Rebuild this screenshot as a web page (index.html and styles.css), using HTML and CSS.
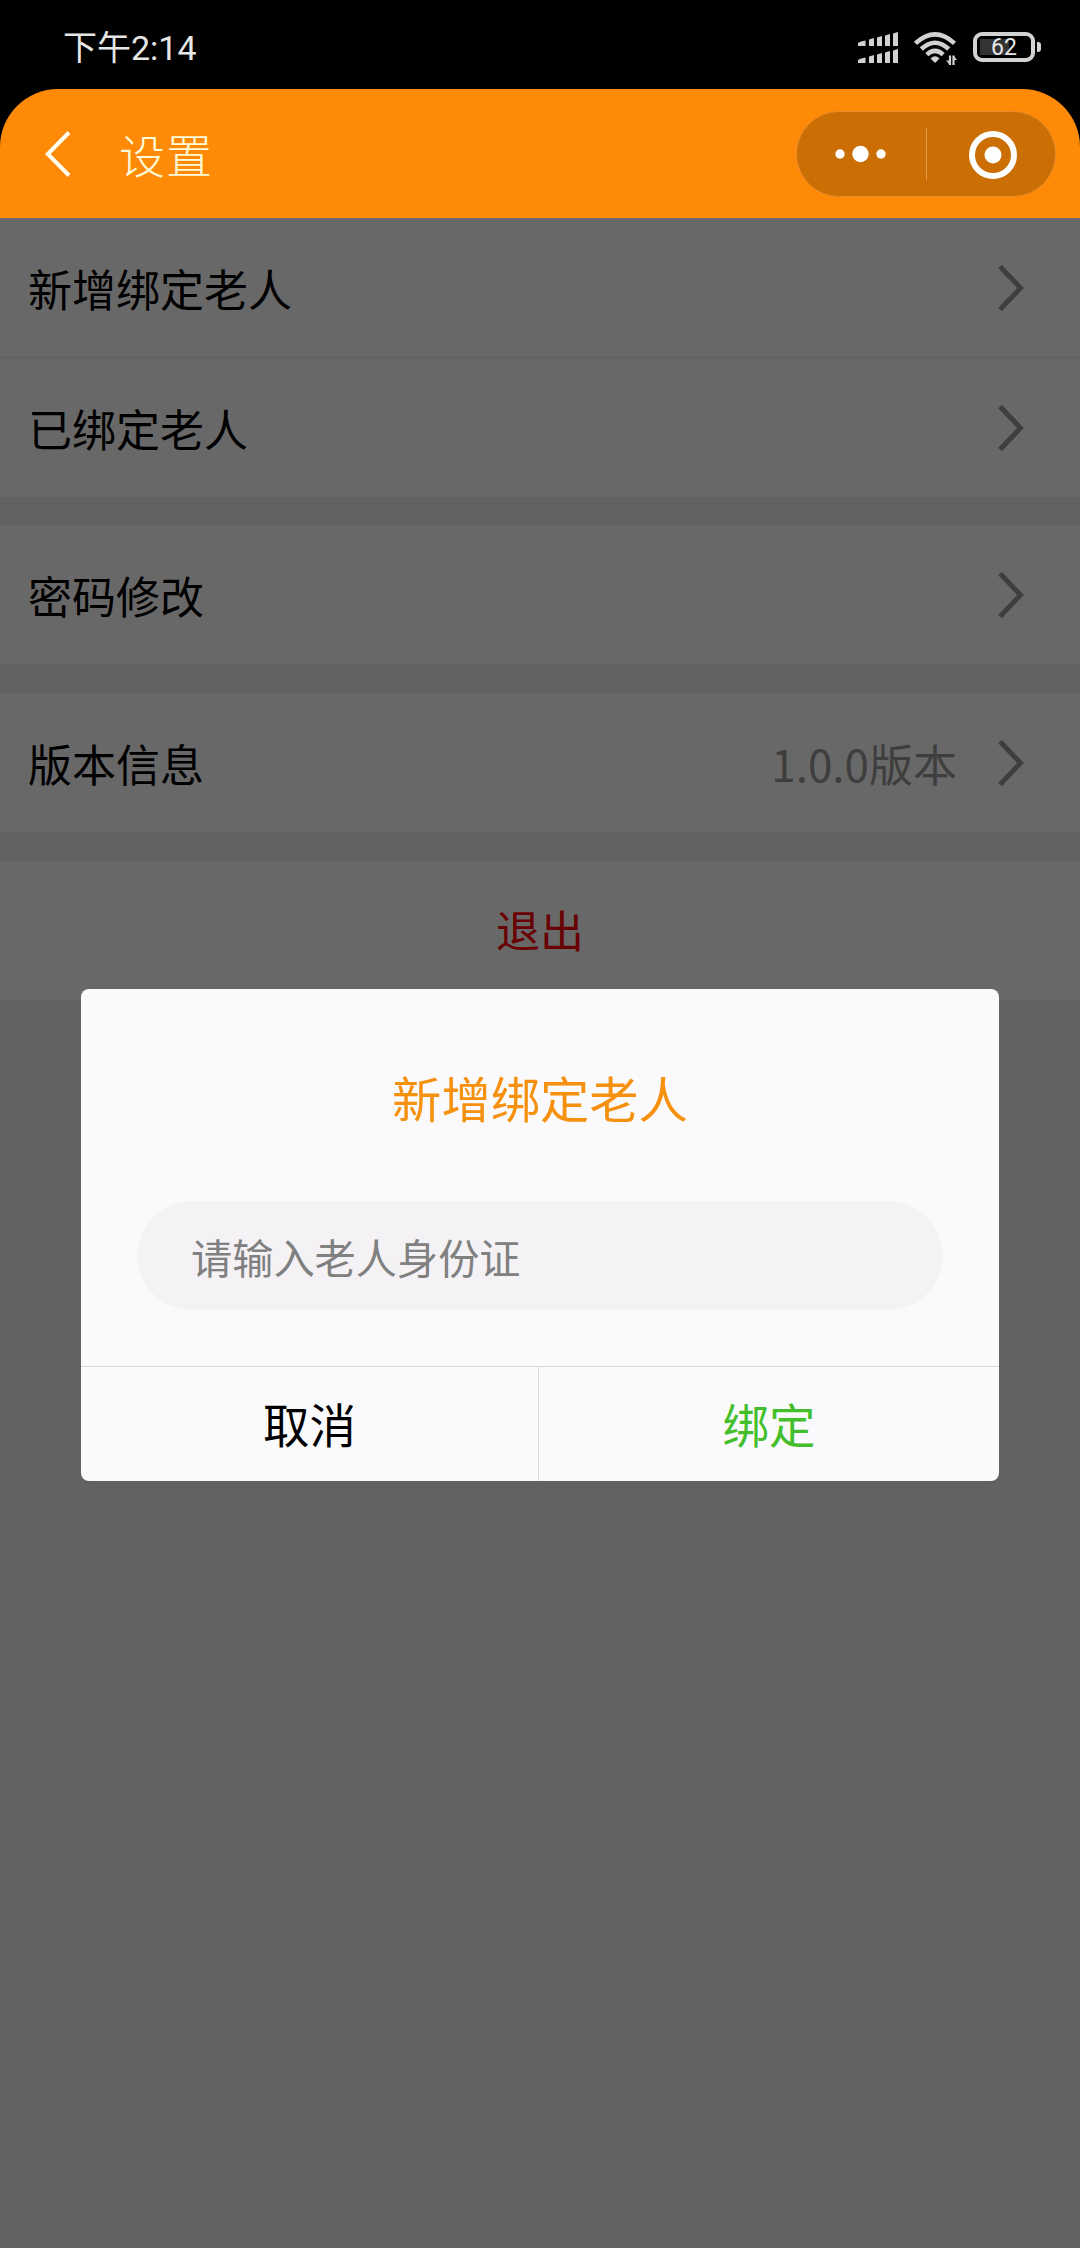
FILE: index.html
```
<!DOCTYPE html>
<html lang="zh-CN">
	<head>
		<meta charset="utf-8"/>
		<title>设置</title>
		<link rel="stylesheet" href="styles.css">
		<meta name="viewport" content="width=device-width, initial-scale=1.0">
	</head>
	<body>
		<div class="status">
			<span class="time">下午2:14</span>
			<svg class="signal" width="40" height="32" viewBox="0 0 40 32" fill="#d2d2d2">
				<path d="M0 11.500q0-1.500 7.500-3V14H0zM11 7.500l5-1.500V14h-5zM19 5.500l5-1.500V14h-5zM27 3.500l5-1.500V14h-5zM35 1.500l5-1.500V14h-5z"/>
				<path d="M0 28.500q0-1.500 7.500-3V31H0zM11 24.500l5-1.500V31h-5zM19 22.500l5-1.500V31h-5zM27 20.500l5-1.500V31h-5zM35 18.500l5-1.500V31h-5z"/>
			</svg>
			<svg class="wifi" width="43" height="34" viewBox="0 0 43 34" fill="none" stroke="#d2d2d2" stroke-width="4.500">
				<path d="M1.500 11.300Q21 -6.500 40.500 11.300"/>
				<path d="M7.300 17Q21 4.500 34.700 17"/>
				<path d="M12.800 22.600Q21 15.200 29.200 22.600"/>
				<path d="M16.500 26.500Q21 22 25.500 26.500L21 31z" fill="#d2d2d2" stroke="none"/>
				<path d="M36 23.500v9.500M39.500 23.500v9.500" stroke-width="2.200"/>
				<path d="M32 28.500l4 4.500v-4.500zM43 28l-3.500-4.500V28z" fill="#d2d2d2" stroke="none"/>
			</svg>
			<div class="battery"><span>62</span></div>
		</div>
		<header class="nav">
			<svg class="back" width="26" height="46" viewBox="0 0 26 46" fill="none" stroke="#fffef0" stroke-width="4">
				<path d="M24 1.500L2.800 23l21.200 21.500"/>
			</svg>
			<h1>设置</h1>
			<div class="capsule">
				<svg width="129" height="84" viewBox="0 0 129 84" fill="#fff">
					<circle cx="43" cy="42" r="4.700"/>
					<circle cx="63.500" cy="42" r="8.200"/>
					<circle cx="84" cy="42" r="4.700"/>
				</svg>
				<svg class="close" width="129" height="84" viewBox="0 0 129 84">
					<circle cx="67" cy="43" r="21" fill="none" stroke="#fff" stroke-width="6"/>
					<circle cx="67" cy="43" r="8.500" fill="#fff"/>
				</svg>
			</div>
		</header>
		<main>
			<div class="group">
				<div class="row">
					<span>新增绑定老人</span>
					<svg class="arrow" width="28" height="48" viewBox="0 0 28 48"><path d="M2 2.500l20.500 21.500L2 45.500"/></svg>
				</div>
				<div class="row">
					<span>已绑定老人</span>
					<svg class="arrow" width="28" height="48" viewBox="0 0 28 48"><path d="M2 2.500l20.500 21.500L2 45.500"/></svg>
				</div>
			</div>
			<div class="row">
				<span>密码修改</span>
				<svg class="arrow" width="28" height="48" viewBox="0 0 28 48"><path d="M2 2.500l20.500 21.500L2 45.500"/></svg>
			</div>
			<div class="row">
				<span>版本信息</span>
				<span class="version">1.0.0版本</span>
				<svg class="arrow" width="28" height="48" viewBox="0 0 28 48"><path d="M2 2.500l20.500 21.500L2 45.500"/></svg>
			</div>
			<div class="row logout">退出</div>
			<div class="mask">
				<form class="modal">
					<h2>新增绑定老人</h2>
					<input type="text" name="idcard" placeholder="请输入老人身份证">
					<div class="buttons">
						<button type="button">取消</button>
						<button type="button" class="ok">绑定</button>
					</div>
				</form>
			</div>
		</main>
	</body>
</html>
```
FILE: styles.css
```
* {
    box-sizing: border-box;
}
body {
    margin: 0;
    height: 2248px;
    display: flex;
    flex-direction: column;
    background: #000;
    font-family: "Noto Sans CJK SC", sans-serif;
    color: #000;
}
svg {
    display: block;
    flex: none;
}
.status {
    display: flex;
    align-items: flex-start;
    height: 89px;
    padding: 32px 39px 0 63px;
    color: #e6e6e6;
}
.time {
    margin-right: auto;
    font-family: Roboto, "Noto Sans CJK SC", sans-serif;
    font-size: 34px;
    line-height: 32px;
}
.wifi {
    margin: 0 16px 0 16px;
}
.battery {
    display: flex;
    position: relative;
    width: 62px;
    height: 30px;
    margin-right: 6px;
    border: 4px solid #d2d2d2;
    border-radius: 9px;
    background: linear-gradient(90deg, #333 60%, #000 60%) 3px 3px / 48px 16px no-repeat;
    justify-content: center;
    font: 23px/24px Roboto, sans-serif;
}
.battery::after {
    content: "";
    position: absolute;
    right: -10px;
    top: 6px;
    width: 4px;
    height: 10px;
    border-radius: 0 3px 3px 0;
    background: #d2d2d2;
}
.nav {
    display: flex;
    align-items: center;
    height: 129px;
    padding: 0 24px 0 45px;
    border-radius: 58px 58px 0 0;
    background: #ff8a08;
}
.nav h1 {
    margin: -2px auto 0 48px;
    font-size: 46px;
    line-height: 60px;
    font-weight: 300;
    color: #fffbd8;
    letter-spacing: 1px;
}
.capsule {
    display: flex;
    align-items: center;
    width: 260px;
    height: 86px;
    border: 1px solid #e38a2a;
    border-radius: 43px;
    background: #cb6e04;
}
.close {
    background: linear-gradient(#e39a4a, #e39a4a) 0 50% / 1px 52px no-repeat;
}
main {
    position: relative;
    flex: 1;
    display: flex;
    flex-direction: column;
    gap: 29px;
    background: #f1f1f1;
}
.group {
    margin-bottom: -2px;
}
.row {
    display: flex;
    align-items: center;
    height: 139px;
    padding: 0 54px 0 28px;
    background: #fff;
    font-size: 44px;
    line-height: 60px;
}
.group .row {
    height: 140px;
    border-bottom: 1px solid #ececec;
}
.arrow {
    margin-left: auto;
    fill: none;
    stroke: #999;
    stroke-width: 5px;
}
.version {
    margin-left: auto;
    color: #999;
}
.version + .arrow {
    margin-left: 41px;
}
.logout {
    justify-content: center;
    padding: 0 0 3px;
    color: #ff000c;
}
/* dims everything under the nav bar */
.mask {
    position: absolute;
    inset: 0;
    display: flex;
    align-items: center;
    justify-content: center;
    padding-top: 4px;
    background: rgba(0, 0, 0, 0.592);
}
.modal {
    display: flex;
    flex-direction: column;
    width: 918px;
    height: 492px;
    border-radius: 8px;
    overflow: hidden;
    background: #fafafc;
}
.modal h2 {
    margin: 73px 0 69px;
    font-size: 49.3px;
    line-height: 70px;
    font-weight: 400;
    text-align: center;
    color: #f6900f;
}
.modal input {
    height: 109px;
    margin: 0 56px;
    padding: 0 54px;
    border: 0;
    border-radius: 55px;
    background: #f4f2f5;
    font-family: inherit;
    font-size: 41.2px;
}
.modal input::placeholder {
    color: #808080;
}
.buttons {
    display: flex;
    height: 115px;
    margin-top: auto;
    border-top: 1px solid #d8d8da;
}
.buttons button {
    width: 457px;
    padding: 0 0 3px;
    border: 0;
    background: none;
    font-family: inherit;
    font-size: 46.500px;
    color: #000;
}
.buttons .ok {
    width: 461px;
    border-left: 1px solid #d8d8da;
    color: #43bf2c;
}
```
